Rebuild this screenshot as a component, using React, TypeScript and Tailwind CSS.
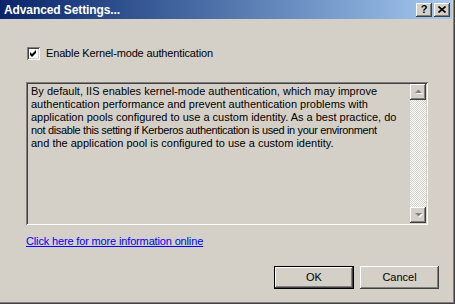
const raised =
  "shadow-[inset_-1px_-1px_#404040,inset_1px_1px_#ffffff,inset_-2px_-2px_#808080,inset_2px_2px_#d4d0c8]"
const sunken =
  "shadow-[inset_1px_1px_#808080,inset_-1px_-1px_#ffffff,inset_2px_2px_#404040,inset_-2px_-2px_#d4d0c8]"

// wrapped the way the original dialog wraps it
const lines = [
  { text: "By default, IIS enables kernel-mode authentication, which may improve", cls: "" },
  { text: "authentication performance and prevent authentication problems with", cls: "" },
  { text: "application pools configured to use a custom identity. As a best practice, do", cls: "" },
  { text: "not disable this setting if Kerberos authentication is used in your environment", cls: "tracking-[-0.36px]" },
  { text: "and the application pool is configured to use a custom identity.", cls: "" },
]

const ScrollArrow = ({ down }: { down?: boolean }) => (
  <div className={`w-[16px] h-[16px] bg-[#d4d0c8] flex items-center justify-center ${raised}`}>
    <svg width="9" height="6" viewBox="0 0 9 6">
      {down ? (
        <>
          <polygon points="2,2 9,2 5.5,5.5" fill="#ffffff" />
          <polygon points="1,1 8,1 4.5,4.5" fill="#808080" />
        </>
      ) : (
        <>
          <polygon points="5.5,1.5 9,5 2,5" fill="#ffffff" />
          <polygon points="4.5,0.5 8,4 1,4" fill="#808080" />
        </>
      )}
    </svg>
  </div>
)

export default function App() {
  return (
    <div
      className="w-[455px] h-[304px] bg-[#d4d0c8] flex flex-col shadow-[inset_-1px_-1px_#404040,inset_-2px_-2px_#808080] overflow-hidden"
      style={{ fontFamily: '"Liberation Sans", Arial, sans-serif' }}
    >
      {/* title bar */}
      <div className="pr-[3px]">
        <div className="h-[19px] flex items-center pl-[4px] pr-[2px] bg-gradient-to-r from-[#0a246a] to-[#a6caf0]">
          <span className="text-white font-bold text-[12px] leading-none tracking-[-0.1px]">Advanced Settings...</span>
          <div className="ml-auto flex gap-[2px]">
            <div className={`w-[16px] h-[14px] bg-[#d4d0c8] flex items-center justify-center ${raised}`}>
              <span className="text-black font-bold text-[11px] leading-none">?</span>
            </div>
            <div className={`w-[16px] h-[14px] bg-[#d4d0c8] flex items-center justify-center ${raised}`}>
              <svg width="8" height="7" viewBox="0 0 8 7">
                <path d="M0.5 0.5 L7.5 6.5 M7.5 0.5 L0.5 6.5" stroke="#000" strokeWidth="1.6" />
              </svg>
            </div>
          </div>
        </div>
      </div>

      <div className="flex-1 flex flex-col pl-[26px] pr-[27px] pb-[15px] text-[11px] text-black">
        {/* checkbox */}
        <div className="mt-[28px] h-[13px] flex items-center">
          <div className={`ml-[1px] w-[13px] h-[13px] bg-white flex items-center justify-center ${sunken}`}>
            <svg width="7" height="7" viewBox="0 0 7 7">
              <path d="M0 2 L2 4 L6 0 L6 3 L2 7 L0 5 Z" fill="#000" />
            </svg>
          </div>
          <span className="ml-[6px] leading-[13px] tracking-[-0.15px]">Enable Kernel-mode authentication</span>
        </div>

        {/* read-only description */}
        <div className={`mt-[22px] h-[143px] flex p-[2px] ${sunken}`}>
          <div className="flex-1 min-w-0 pl-[3px] pt-[1px] leading-[13px] overflow-hidden">
            {lines.map((l) => (
              <div key={l.text} className={`whitespace-nowrap ${l.cls}`}>
                {l.text}
              </div>
            ))}
          </div>
          <div className="w-[16px] flex flex-col">
            <ScrollArrow />
            <div className="flex-1 bg-[repeating-conic-gradient(#ffffff_0%_25%,#d4d0c8_0%_50%)] [background-size:2px_2px]" />
            <ScrollArrow down />
          </div>
        </div>

        <a className="mt-[10px] self-start leading-[13px] tracking-[-0.15px] text-[#0000ff] underline underline-offset-[1px] cursor-pointer">
          Click here for more information online
        </a>

        {/* buttons */}
        <div className="mt-auto flex justify-end gap-[6px] mr-[-11px]">
          <button className="w-[80px] h-[23px] border border-black bg-[#d4d0c8] p-0">
            <div className={`w-full h-full flex items-center justify-center ${raised}`}>OK</div>
          </button>
          <button className={`w-[79px] h-[23px] bg-[#d4d0c8] flex items-center justify-center ${raised}`}>
            Cancel
          </button>
        </div>
      </div>
    </div>
  )
}
